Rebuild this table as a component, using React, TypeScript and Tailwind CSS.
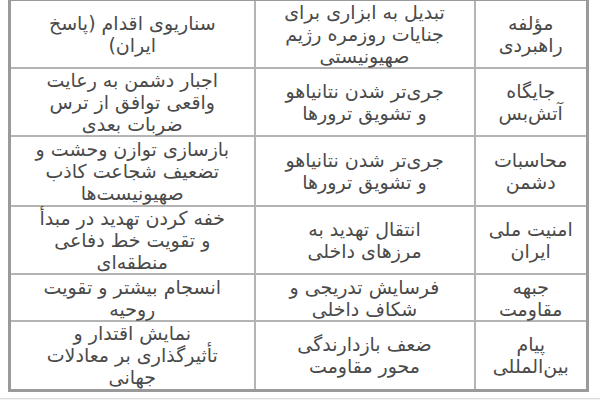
import React from "react";

const rows = [
  { h: "h-[68px]", a: ["مؤلفه", "راهبردی"], b: ["تبدیل به ابزاری برای", "جنایات روزمره رژیم", "صهیونیستی"], c: ["سناریوی اقدام (پاسخ", "ایران)"] },
  { h: "h-[67px]", a: ["جایگاه", "آتش‌بس"], b: ["جری‌تر شدن نتانیاهو", "و تشویق ترورها"], c: ["اجبار دشمن به رعایت", "واقعی توافق از ترس", "ضربات بعدی"] },
  { h: "h-[70px]", a: ["محاسبات", "دشمن"], b: ["جری‌تر شدن نتانیاهو", "و تشویق ترورها"], c: ["بازسازی توازن وحشت و", "تضعیف شجاعت کاذب", "صهیونیست‌ها"] },
  { h: "h-[68px]", a: ["امنیت ملی", "ایران"], b: ["انتقال تهدید به", "مرزهای داخلی"], c: ["خفه کردن تهدید در مبدأ", "و تقویت خط دفاعی", "منطقه‌ای"] },
  { h: "h-[47px]", a: ["جبهه", "مقاومت"], b: ["فرسایش تدریجی و", "شکاف داخلی"], c: ["انسجام بیشتر و تقویت", "روحیه"] },
  { h: "h-[69px]", a: ["پیام", "بین‌المللی"], b: ["ضعف بازدارندگی", "محور مقاومت"], c: ["نمایش اقتدار و", "تأثیرگذاری بر معادلات", "جهانی"] },
];

const cell =
  "border-2 border-[#b4b4b4] p-0 text-center align-middle leading-[22px] whitespace-nowrap";

function Lines({ items }: { items: string[] }) {
  return (
    <div className="flex flex-col items-center">
      {items.map((t, i) => (
        <span key={i}>{t}</span>
      ))}
    </div>
  );
}

export default function App() {
  return (
    <div className="w-[600px] h-[400px] overflow-hidden bg-white">
      <div className="pl-[8px] pr-[11px] -mt-[2px]">
        <table
          dir="rtl"
          className="w-full table-fixed border-collapse border-[3px] border-[#9a9a9a] text-[19px] text-[#4a4a4a] tracking-[1px]"
          style={{ fontFamily: '"DejaVu Sans", Tahoma, sans-serif' }}
        >
          <colgroup>
            <col className="w-[113px]" />
            <col className="w-[220px]" />
            <col />
          </colgroup>
          <tbody>
            {rows.map((r, i) => (
              <tr key={i} className={r.h}>
                <td className={cell}><Lines items={r.a} /></td>
                <td className={cell}><Lines items={r.b} /></td>
                <td className={cell}><Lines items={r.c} /></td>
              </tr>
            ))}
          </tbody>
        </table>
      </div>
      <div className="mt-[6px] h-[1px] bg-[#dcdcdc]" />
      <div className="h-full bg-[#f3f3f3]" />
    </div>
  );
}
